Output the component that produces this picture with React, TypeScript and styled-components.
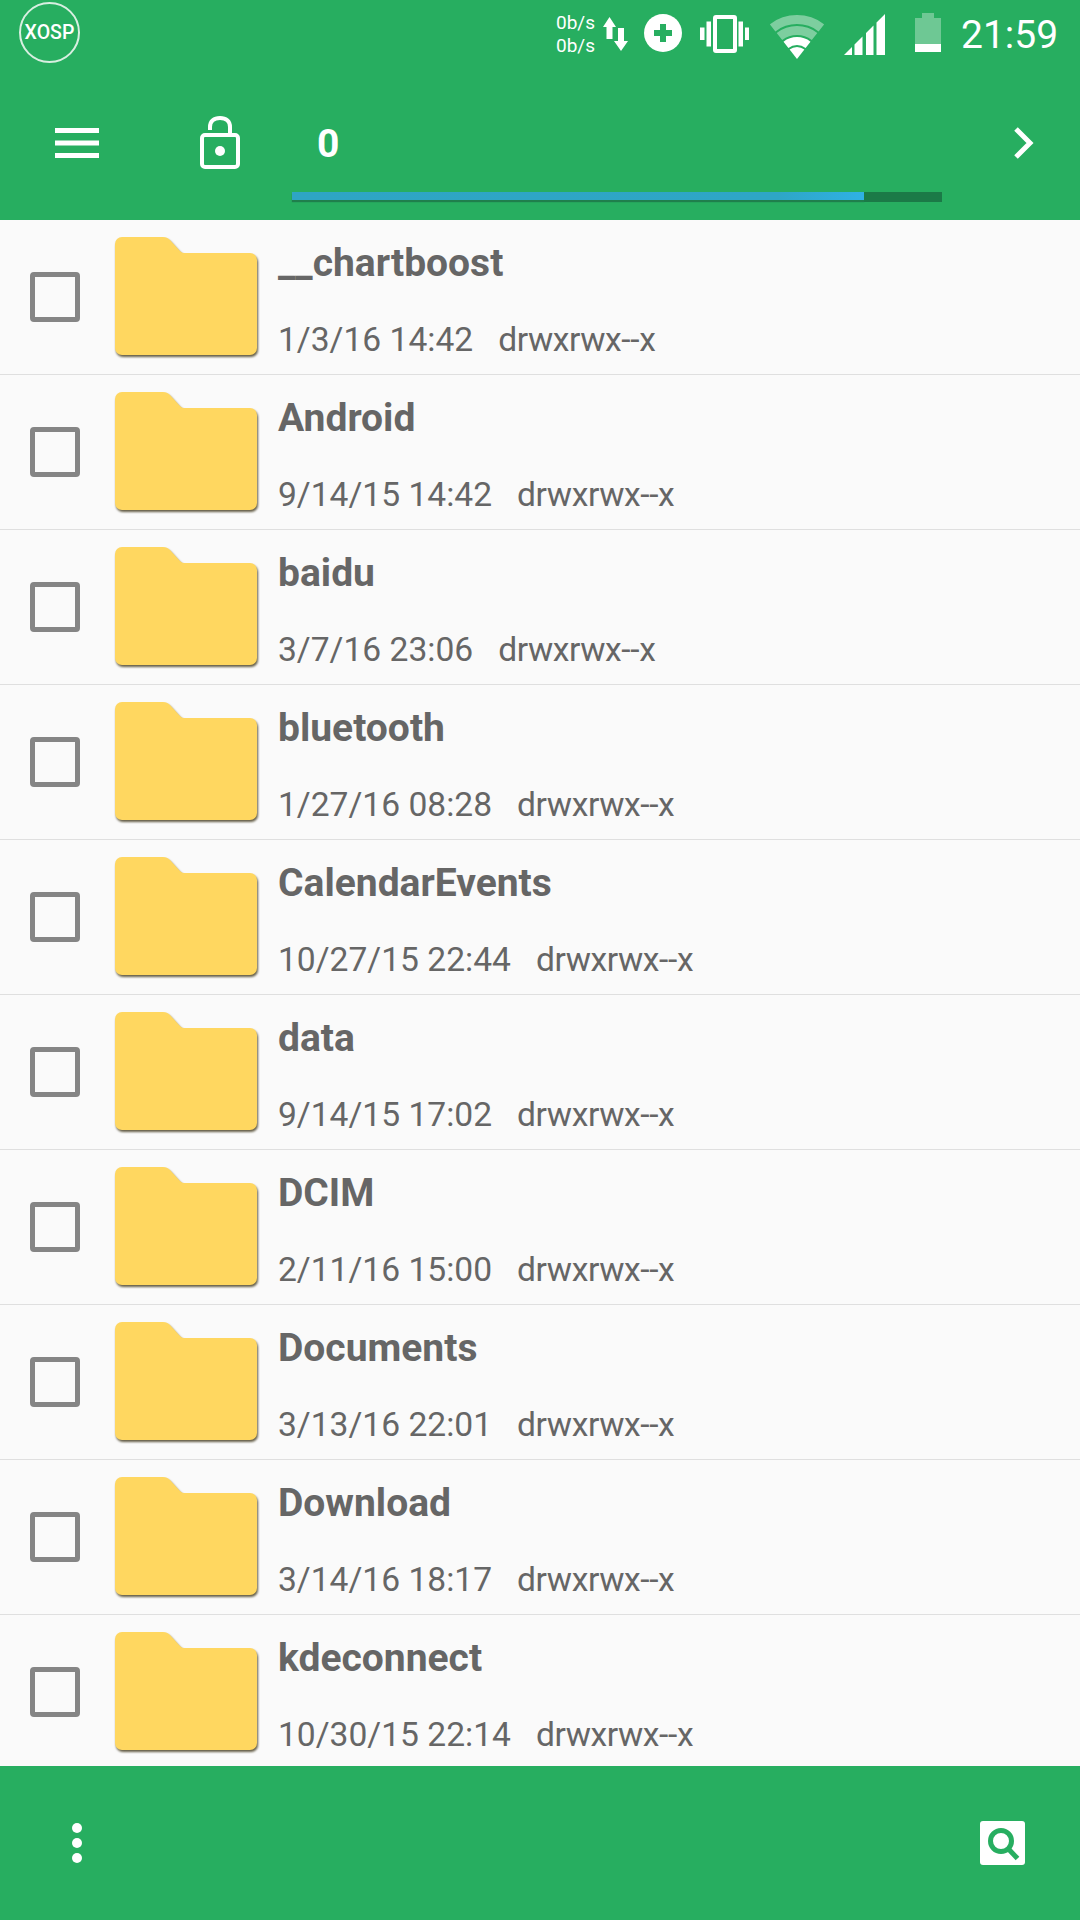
import React from "react";
import styled, { createGlobalStyle } from "styled-components";

const Global = createGlobalStyle`
  html, body { margin: 0; padding: 0; background: #fafafa; }
  * { box-sizing: border-box; }
`;

const Screen = styled.div`
  width: 1080px; height: 1920px; overflow: hidden;
  display: flex; flex-direction: column;
  background: #fafafa; font-family: Roboto, "Liberation Sans", sans-serif;
`;
const Header = styled.header`
  height: 220px; flex: none; background: #27ae60; color: #fff;
  display: flex; flex-direction: column;
`;
const StatusBar = styled.div`
  height: 70px; display: flex; align-items: flex-start; padding: 2px 0 0 19px;
`;
const Logo = styled.div`
  width: 61px; height: 61px; border-radius: 50%; border: 2px solid #d8efe1;
  display: flex; align-items: center; justify-content: center;
  font-size: 19.5px; font-weight: 500;
`;
const StatusRight = styled.div`
  margin-left: auto; display: flex; align-items: flex-start; height: 60px;
`;
const Speed = styled.div`
  width: 44px; padding-top: 9px; font-size: 19px; line-height: 23px; text-align: right;
`;
const StatusIcon = styled.svg<{ $ml: number; $mt: number }>`
  display: block; flex: none; margin-left: ${p => p.$ml}px; margin-top: ${p => p.$mt}px;
`;
const Clock = styled.div`
  margin: 11px 21px 0 20px; font-size: 39px; line-height: 44px; width: 98px;
`;
const Toolbar = styled.div`
  flex: 1; display: flex; align-items: flex-start;
`;
const IconSlot = styled.div<{ $w: number; $pl: number; $pt: number }>`
  width: ${p => p.$w}px; padding: ${p => p.$pt}px 0 0 ${p => p.$pl}px; flex: none;
  svg { display: block; }
`;
const PathColumn = styled.div`
  width: 650px; flex: none; display: flex; flex-direction: column;
`;
const PathText = styled.div`
  padding: 52px 0 0 25px; font-size: 39px; line-height: 44px; font-weight: 700;
  margin-bottom: 26px;
`;
const ProgressTrack = styled.div`
  height: 10px; background: #1b7a47; display: flex;
`;
const ProgressFill = styled.div`
  height: 8px; background: linear-gradient(90deg, #2ea5c4 0%, #2ea6c6 85%, #2fb1e3 100%);
  box-shadow: 0 2px 1px #1f7f4c;
`;
const List = styled.main`
  flex: 1; min-height: 0; overflow: hidden;
`;
const Row = styled.div`
  height: 155px; display: flex; align-items: flex-start;
  border-bottom: 1.5px solid #dfdfdf;
`;
const Check = styled.div`
  width: 50px; height: 50px; margin: 52px 0 0 30px; flex: none;
  border: 5px solid #858585; border-radius: 4px;
`;
const FolderIcon = styled.svg`
  display: block; flex: none; margin: 17px 0 0 35px; overflow: visible;
  filter: drop-shadow(1px 2px 1px rgba(50, 40, 10, 0.75));
`;
const RowText = styled.div`
  margin-left: 21px; color: #666; display: flex; flex-direction: column;
`;
const Name = styled.div`
  margin-top: 20px; font-size: 39px; line-height: 46px; font-weight: 700; white-space: pre;
`;
const Meta = styled.div`
  margin-top: 34px; font-size: 33.6px; line-height: 40px; white-space: pre; display: flex; gap: 25px;
`;
const Perms = styled.span`
  letter-spacing: -0.4px;
`;
const Footer = styled.footer`
  height: 154px; flex: none; background: #27ae60;
  display: flex; align-items: flex-start; justify-content: space-between; padding: 55px 55px 0 72px;
`;
const Dots = styled.div`
  display: flex; flex-direction: column; gap: 5px; padding-top: 2px;
`;
const Dot = styled.span`
  width: 10px; height: 10px; border-radius: 50%; background: #fff; display: block;
`;
const SearchBox = styled.div`
  width: 45px; height: 44px; background: #fff; border-radius: 3px;
  svg { display: block; }
`;

const rows = [
  ["__chartboost", "1/3/16 14:42"],
  ["Android", "9/14/15 14:42"],
  ["baidu", "3/7/16 23:06"],
  ["bluetooth", "1/27/16 08:28"],
  ["CalendarEvents", "10/27/15 22:44"],
  ["data", "9/14/15 17:02"],
  ["DCIM", "2/11/16 15:00"],
  ["Documents", "3/13/16 22:01"],
  ["Download", "3/14/16 18:17"],
  ["kdeconnect", "10/30/15 22:14"],
];

const Folder = () => (
  <FolderIcon width="142" height="118" viewBox="0 0 142 118">
    <path d="M0 7a7 7 0 0 1 7-7h41c3 0 5 1 7 3l9 10c2 2 3 3 5 3h66a7 7 0 0 1 7 7v88a7 7 0 0 1-7 7H7a7 7 0 0 1-7-7z" fill="#ffd760" />
  </FolderIcon>
);

export default function App() {
  return (
    <Screen>
      <Global />
      <Header>
        <StatusBar>
          <Logo>XOSP</Logo>
          <StatusRight>
            <Speed>0b/s<br />0b/s</Speed>
            <StatusIcon $ml={8} $mt={15} width="25" height="35" viewBox="0 0 25 35" fill="#fff">
              <path d="M6.500 0 13 10H9.500V22H3.500V10H0zM18 34 25 24H21V11H15V24H11z" />
            </StatusIcon>
            <StatusIcon $ml={16} $mt={12} width="38" height="38" viewBox="0 0 38 38">
              <circle cx="19" cy="19" r="19" fill="#fff" />
              <path d="M16 10h6v6h6v6h-6v6h-6v-6h-6v-6h6z" fill="#27ae60" />
            </StatusIcon>
            <StatusIcon $ml={18} $mt={13} width="49" height="38" viewBox="0 0 49 38" fill="#fff">
              <path d="M0 12.500h4.500v12.500H0zM6.500 6.500h4.500v25H6.500zM38.500 6.500h4.500v25h-4.500zM45 12.500h4.500v12.500H45z" />
              <path d="M13 3a3 3 0 0 1 3-3h18a3 3 0 0 1 3 3v32a3 3 0 0 1-3 3H16a3 3 0 0 1-3-3zm4 1v30h16V4z" fillRule="evenodd" />
            </StatusIcon>
            <StatusIcon $ml={21} $mt={12} width="54" height="46" viewBox="0 0 54 46" fill="#fff">
              <path d="M-.1 10.300A44 44 0 0 1 54.100 10.300L48.600 17.400A35 35 0 0 0 5.400 17.400z" opacity=".4" />
              <path d="M6.700 19A33 33 0 0 1 47.300 19L41.800 26.100A24 24 0 0 0 12.200 26.100z" opacity=".4" />
              <path d="M13.500 27.700A22 22 0 0 1 40.500 27.700L35.600 34A14 14 0 0 0 18.400 34z" />
              <path d="M19.600 35.500A12 12 0 0 1 34.400 35.500L27 45z" />
            </StatusIcon>
            <StatusIcon $ml={20} $mt={12} width="41" height="41" viewBox="0 0 41 41" fill="#fff">
              <path d="M0 41 8 33V41zM10.500 30.500 18.500 22.500V41H10.500zM22 19 29.500 11.500V41H22zM32.500 8.500 41 0V41H32.500z" />
            </StatusIcon>
            <StatusIcon $ml={30} $mt={11} width="26" height="39" viewBox="0 0 26 39" fill="#fff">
              <path d="M7 0H19V5H26V31H0V5H7z" opacity=".33" />
              <path d="M0 31H26V39H0z" />
            </StatusIcon>
            <Clock>21:59</Clock>
          </StatusRight>
        </StatusBar>
        <Toolbar>
          <IconSlot $w={200} $pl={55} $pt={58}>
            <svg width="44" height="30" viewBox="0 0 44 30" fill="#fff">
              <path d="M0 0h44v5H0zM0 12.500h44v5H0zM0 25h44v5H0z" />
            </svg>
          </IconSlot>
          <IconSlot $w={92} $pl={0} $pt={46}>
            <svg width="40" height="53" viewBox="0 0 40 53" fill="none" stroke="#fff">
              <path d="M10 14V11C10 5 14 2 20 2S30 5 30 11v8" strokeWidth="4" />
              <rect x="2" y="19" width="36" height="32" rx="3" strokeWidth="4" />
              <circle cx="20" cy="35" r="5" fill="#fff" stroke="none" />
            </svg>
          </IconSlot>
          <PathColumn>
            <PathText>0</PathText>
            <ProgressTrack>
              <ProgressFill style={{ width: `${(572 / 650) * 100}%` }} />
            </ProgressTrack>
          </PathColumn>
          <IconSlot $w={138} $pl={71} $pt={57}>
            <svg width="22" height="32" viewBox="0 0 22 32" fill="none" stroke="#fff" strokeWidth="5">
              <path d="M3 2 17 16 3 30" />
            </svg>
          </IconSlot>
        </Toolbar>
      </Header>
      <List>
        {rows.map(([name, date]) => (
          <Row key={name}>
            <Check />
            <Folder />
            <RowText>
              <Name>{name}</Name>
              <Meta><span>{date}</span><Perms>drwxrwx--x</Perms></Meta>
            </RowText>
          </Row>
        ))}
      </List>
      <Footer>
        <Dots><Dot /><Dot /><Dot /></Dots>
        <SearchBox>
          <svg width="45" height="44" viewBox="0 0 45 44" fill="none" stroke="#27ae60">
            <circle cx="21" cy="20" r="10.500" strokeWidth="5" />
            <path d="M28.500 28 37.500 37.500" strokeWidth="5" />
          </svg>
        </SearchBox>
      </Footer>
    </Screen>
  );
}
